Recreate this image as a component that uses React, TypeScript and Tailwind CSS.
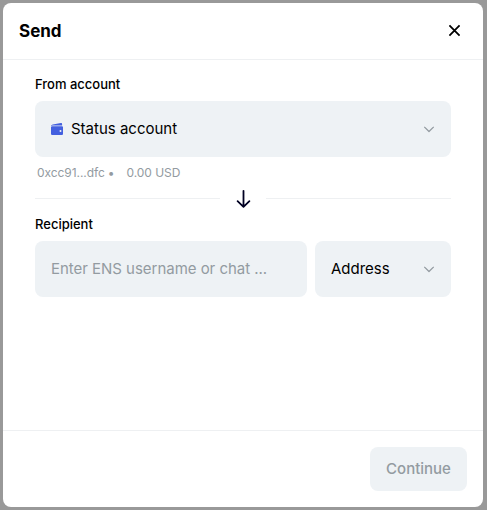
function CloseIcon() {
  return (
    <svg width="24" height="24" viewBox="0 0 24 24" fill="none" stroke="#000" strokeWidth="1.8">
      <path d="M6.4 6.4 16.6 16.6M16.6 6.4 6.4 16.6" />
    </svg>
  );
}

function ChevronIcon() {
  return (
    <svg width="24" height="24" viewBox="0 0 24 24" fill="none" stroke="#939ba1" strokeWidth="1.3" strokeLinejoin="round">
      <path d="M7.3 9.9 12 14.5 16.7 9.9" />
    </svg>
  );
}

function WalletIcon() {
  return (
    <svg width="12" height="13" viewBox="0 0 12 13" fill="#4360df">
      <path d="M0 3.4C0 2.2.7 1.6 1.8 1.4L9.8.1c.8-.1 1.3.3 1.3 1V2.6H1.6C1 2.6.5 2.9 0 3.4Z" />
      <path
        fillRule="evenodd"
        d="M1.5 3.2H10.7C11.5 3.2 12 3.7 12 4.5V10.7C12 11.6 11.5 12.1 10.6 12.1H1.6C.6 12.1 0 11.5 0 10.5V4.5C0 3.7.6 3.2 1.5 3.2ZM9.5 7a1 1 0 1 0 0 2 1 1 0 0 0 0-2Z"
      />
    </svg>
  );
}

function ArrowDownIcon() {
  return (
    <svg width="16" height="20" viewBox="0 0 16 20" fill="none" stroke="#000022" strokeWidth="1.8" strokeLinecap="round" strokeLinejoin="round">
      <path d="M8.5 1.8V17.4M2.6 12.2 8.5 17.8 14.4 12.2" />
    </svg>
  );
}

export default function App() {
  return (
    <div className="h-[510px] w-[487px] bg-[#999999] p-[3px] font-['Inter',sans-serif] text-black">
      <div className="flex h-[504px] w-[480px] flex-col overflow-hidden rounded-lg bg-white">
        <header className="flex h-[57px] shrink-0 items-center justify-between border-b border-[#eef0f2] pr-4 pl-4">
          <h1 className="text-[17px] leading-6 font-bold">Send</h1>
          <button aria-label="Close" className="flex">
            <CloseIcon />
          </button>
        </header>

        <main className="flex-1 px-8 pt-[13px]">
          <div className="text-[13px] leading-[22px] font-medium">From account</div>
          <div className="mt-1.5 flex h-14 items-center rounded-lg bg-[#eef2f5] pr-2.5 pl-4">
            <WalletIcon />
            <span className="ml-2 flex-1 text-[15px] leading-[22px]">Status account</span>
            <ChevronIcon />
          </div>
          <div className="flex h-[31px] items-center pl-0.5 text-xs tracking-[-0.06px] text-[#939ba1]">
            <span>0xcc91...dfc</span>
            <span className="ml-[3px]">•</span>
            <span className="ml-3">0.00 USD</span>
          </div>
          <div className="flex h-[22px] items-center justify-between">
            <div className="mb-px h-px w-[185px] bg-[#eef0f2]" />
            <ArrowDownIcon />
            <div className="mb-px h-px w-[185px] bg-[#eef0f2]" />
          </div>
          <div className="mt-[3px] text-[13px] leading-[22px] font-medium">Recipient</div>
          <div className="mt-1.5 flex gap-2">
            <div className="flex h-14 w-[272px] items-center rounded-lg bg-[#eef2f5] px-4 text-[15px] tracking-[-0.03px] text-[#939ba1]">
              Enter ENS username or chat ...
            </div>
            <div className="flex h-14 flex-1 items-center justify-between rounded-lg bg-[#eef2f5] pr-2.5 pl-4 text-[15px]">
              <span>Address</span>
              <ChevronIcon />
            </div>
          </div>
        </main>

        <footer className="flex h-[77px] shrink-0 items-center justify-end border-t border-[#eef0f2] px-4">
          <button className="h-11 w-[97px] rounded-lg bg-[#eef2f5] text-[15px] font-medium text-[#939ba1]">Continue</button>
        </footer>
      </div>
    </div>
  );
}
